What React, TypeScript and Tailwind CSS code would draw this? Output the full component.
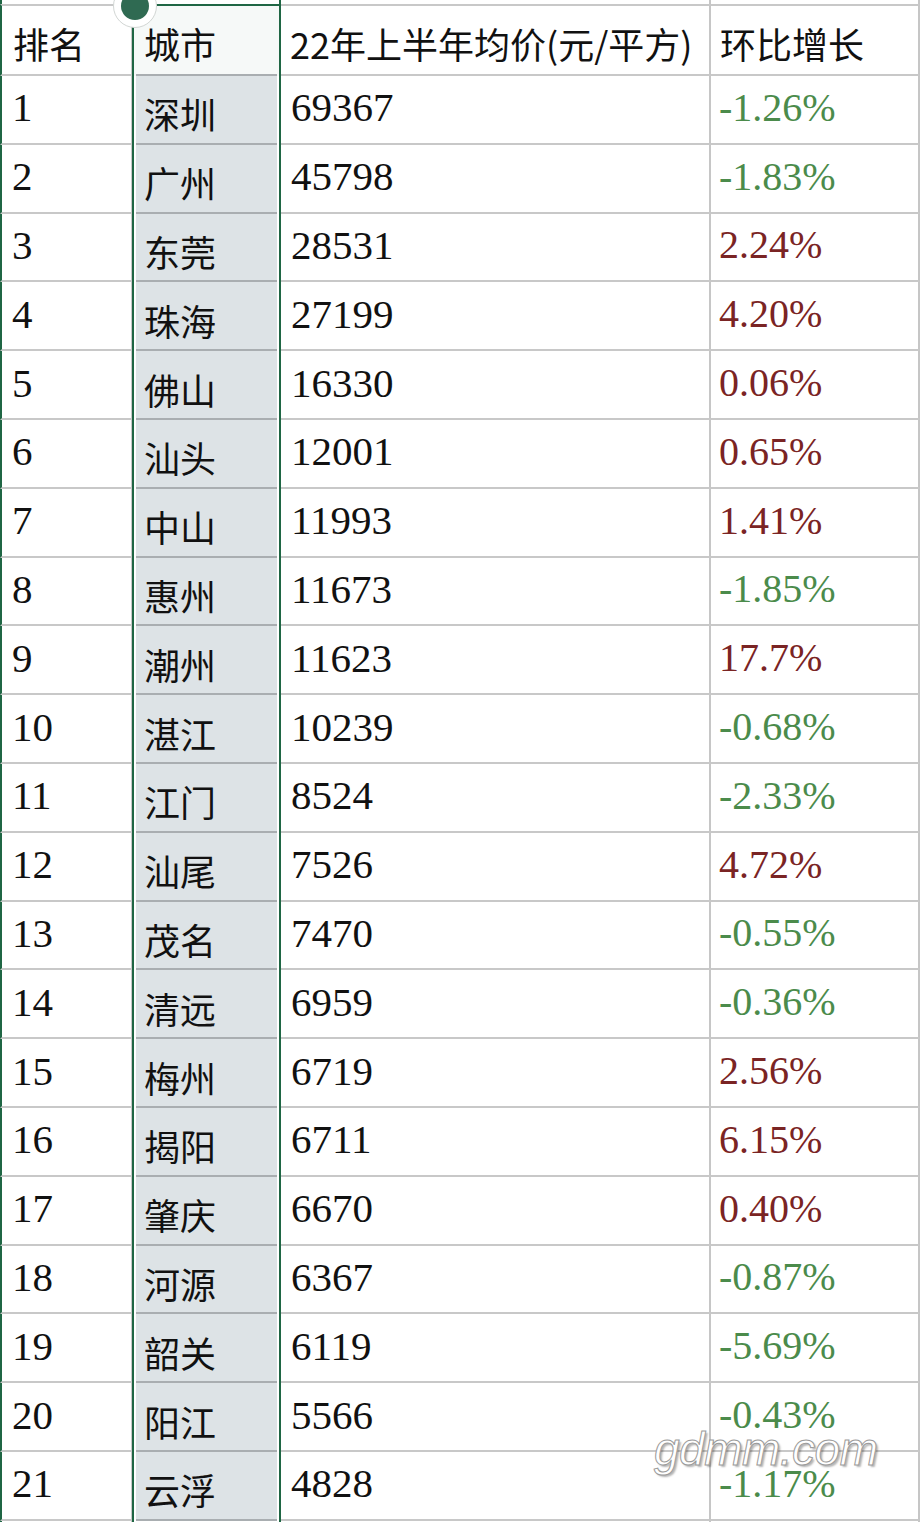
import React from "react";

const rows: [string, string, string, string][] = [
  ["1", "深圳", "69367", "-1.26%"],
  ["2", "广州", "45798", "-1.83%"],
  ["3", "东莞", "28531", "2.24%"],
  ["4", "珠海", "27199", "4.20%"],
  ["5", "佛山", "16330", "0.06%"],
  ["6", "汕头", "12001", "0.65%"],
  ["7", "中山", "11993", "1.41%"],
  ["8", "惠州", "11673", "-1.85%"],
  ["9", "潮州", "11623", "17.7%"],
  ["10", "湛江", "10239", "-0.68%"],
  ["11", "江门", "8524", "-2.33%"],
  ["12", "汕尾", "7526", "4.72%"],
  ["13", "茂名", "7470", "-0.55%"],
  ["14", "清远", "6959", "-0.36%"],
  ["15", "梅州", "6719", "2.56%"],
  ["16", "揭阳", "6711", "6.15%"],
  ["17", "肇庆", "6670", "0.40%"],
  ["18", "河源", "6367", "-0.87%"],
  ["19", "韶关", "6119", "-5.69%"],
  ["20", "阳江", "5566", "-0.43%"],
  ["21", "云浮", "4828", "-1.17%"],
];

const serif = "font-['Liberation_Serif','Times_New_Roman',serif]";
const cjk = "font-['Noto_Sans_CJK_SC','Noto_Sans',sans-serif]";

function Strip({ h }: { h: string }) {
  return (
    <div className={`flex ${h}`}>
      <div className="w-[132px] border-l-2 border-l-[#1f6644] border-r border-r-[#c8c8c8]" />
      <div className="w-[149px] border-x-2 border-[#1f6644] bg-white" />
      <div className="w-[430px] border-r-2 border-[#c6c6c6]" />
      <div className="w-[209px] border-r-2 border-[#c6c6c6]" />
    </div>
  );
}

export default function App() {
  return (
    <div className="relative w-[923px] h-[1522px] overflow-hidden bg-white text-[#111]">
      <Strip h="h-[4px]" />
      {/* header */}
      <div className={`flex h-[72px] ${cjk} text-[36px] leading-none`}>
        <div className="w-[132px] border-l-2 border-l-[#1f6644] border-r border-r-[#c8c8c8] border-y-2 border-y-[#c8c8c8] flex items-center pl-[11px] pt-[6px]">
          排名
        </div>
        <div className="w-[149px] border-x-2 border-t-2 border-[#1f6644] bg-[#f6f9f8] px-[2px]">
          <div className="h-full border-b-2 border-[#a9aeb1] flex items-center pl-[8px] pt-[6px]">城市</div>
        </div>
        <div className="w-[430px] border-r-2 border-r-[#c6c6c6] border-y-2 border-y-[#c8c8c8] flex items-center pl-[9px] pt-[6px] whitespace-nowrap">
          22年上半年均价(元/平方)
        </div>
        <div className="w-[209px] border-r-2 border-r-[#c6c6c6] border-y-2 border-y-[#c8c8c8] flex items-center pl-[9px] pt-[6px]">
          环比增长
        </div>
      </div>
      {rows.map(([rank, city, price, pct]) => {
        const neg = pct.startsWith("-");
        return (
          <div key={rank} className="flex h-[68.8px] leading-none">
            <div className={`w-[132px] border-l-2 border-l-[#1f6644] border-r border-r-[#c8c8c8] border-b-2 border-b-[#c8c8c8] flex items-center pl-[10px] pb-[3px] ${serif} text-[41px]`}>
              {rank}
            </div>
            <div className="w-[149px] border-x-2 border-[#1f6644] bg-white px-[2px]">
              <div className={`h-full bg-[#dde3e6] border-b-2 border-[#a9aeb1] flex items-center pl-[8px] pt-[8px] ${cjk} text-[36px]`}>
                {city}
              </div>
            </div>
            <div className={`w-[430px] border-r-2 border-r-[#c6c6c6] border-b-2 border-b-[#c8c8c8] flex items-center pl-[10px] pb-[3px] ${serif} text-[41px]`}>
              {price}
            </div>
            <div className={`w-[209px] border-r-2 border-r-[#c6c6c6] border-b-2 border-b-[#c8c8c8] flex items-center pl-[8px] pb-[3px] ${serif} text-[40px] ${neg ? "text-[#4b8b4b]" : "text-[#7a2424]"}`}>
              {pct}
            </div>
          </div>
        );
      })}
      <Strip h="h-[4px]" />

      {/* selection handle */}
      <div className="absolute left-[113px] top-[-16px] w-[44px] h-[44px] rounded-full bg-white border border-[#d2d6d4] flex items-center justify-center">
        <div className="w-[28px] h-[28px] rounded-full bg-[#2f6a52]" />
      </div>

      {/* watermark */}
      <div className="absolute left-[654px] top-[1426px] font-['Liberation_Sans','Arial',sans-serif] italic text-[46px] leading-none text-white tracking-[-0.5px] [-webkit-text-stroke:1px_#9a9a9a] [text-shadow:2px_2px_2px_rgba(0,0,0,0.3)]">
        gdmm.com
      </div>
    </div>
  );
}
